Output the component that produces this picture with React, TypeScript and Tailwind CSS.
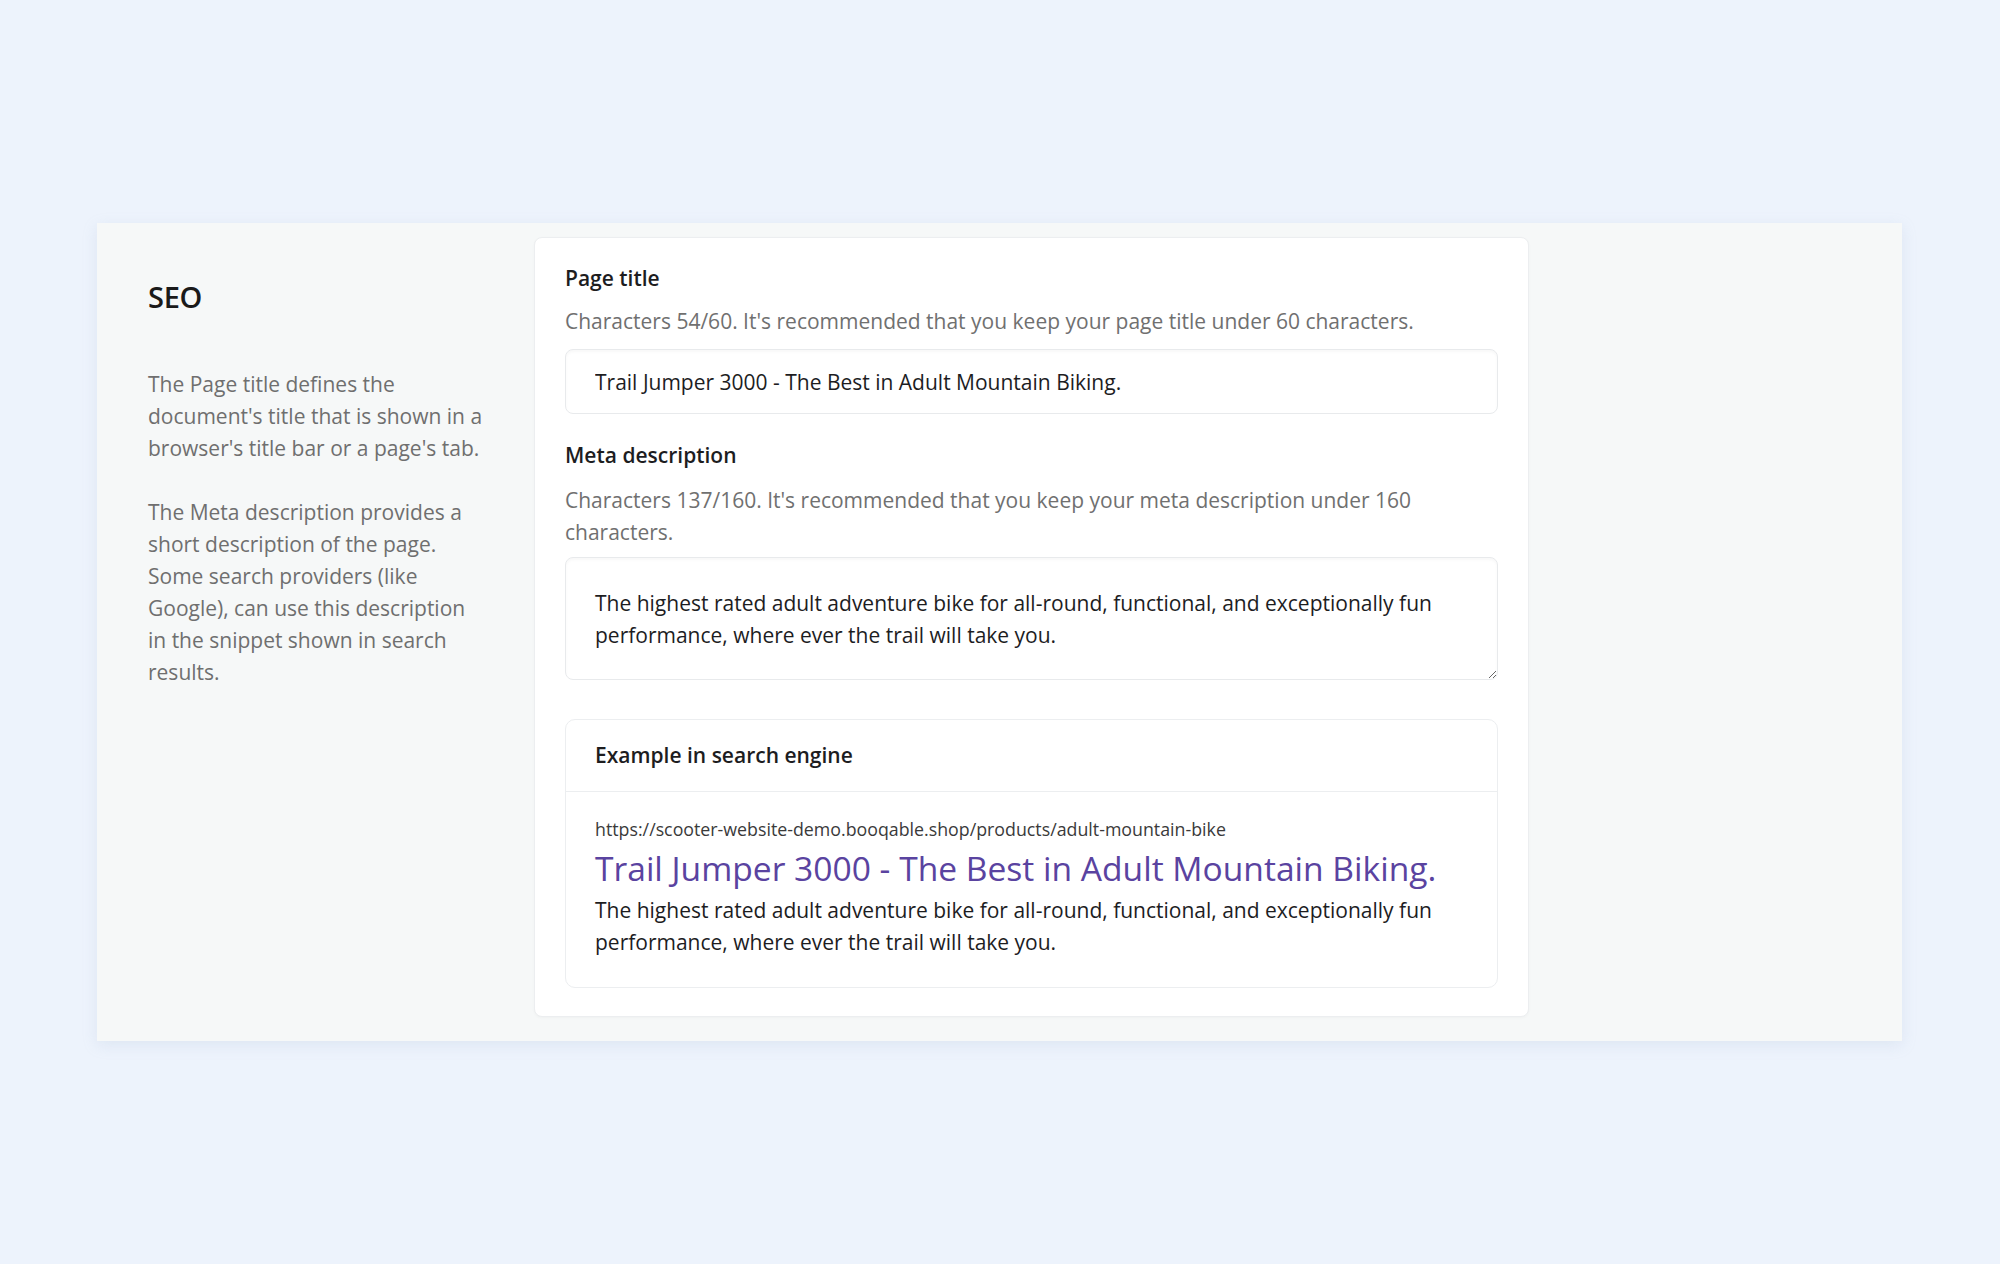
import React from "react";

const title = "Trail Jumper 3000 - The Best in Adult Mountain Biking.";
const description =
  "The highest rated adult adventure bike for all-round, functional, and exceptionally fun performance, where ever the trail will take you.";

export default function App() {
  return (
    <div
      className="min-h-[1264px] w-full bg-[#edf3fc] pl-[97px] pt-[223px] text-[#1d1d1f]"
      style={{ fontFamily: "'Open Sans', 'Noto Sans', Arial, sans-serif" }}
    >
      <div className="flex h-[818px] w-[1805px] bg-[#f6f8f8] pl-[51px] pt-[14px] shadow-[0_4px_14px_rgba(150,170,200,0.18)]">
        {/* left: explanation */}
        <div className="w-[386px] shrink-0 pr-[49px] pt-[43px]">
          <h2 className="text-[29px] font-semibold leading-[34px] tracking-[-0.01em] text-[#1a1a1a]">SEO</h2>
          <p className="mt-[54px] text-[21px] leading-[32px] text-[#6f6f6f]">
            The Page title defines the document's title that is shown in a browser's title bar or a page's tab.
          </p>
          <p className="mt-[32px] text-[21px] leading-[32px] text-[#6f6f6f]">
            The Meta description provides a short description of the page. Some search providers (like Google), can use
            this description in the snippet shown in search results.
          </p>
        </div>

        {/* right: form */}
        <div className="h-[780px] w-[995px] shrink-0 rounded-[8px] border border-[#eceef0] bg-white px-[30px] pt-[26px] shadow-[0_1px_3px_rgba(0,0,0,0.03)]">
          <div className="text-[21px] font-semibold leading-[28px]">Page title</div>
          <p className="mt-[13px] text-[21px] leading-[32px] text-[#707070]">
            Characters 54/60. It's recommended that you keep your page title under 60 characters.
          </p>
          <input
            readOnly
            value={title}
            className="mt-[12px] h-[65px] w-full rounded-[8px] border border-[#e8eaec] bg-white px-[29px] text-[21px] text-[#1d1d1f] shadow-[inset_0_2px_3px_rgba(0,0,0,0.03)] outline-none"
          />

          <div className="mt-[27px] text-[21px] font-semibold leading-[28px]">Meta description</div>
          <p className="mt-[15px] text-[21px] leading-[32px] text-[#707070]">
            Characters 137/160. It's recommended that you keep your meta description under 160 characters.
          </p>
          <textarea
            readOnly
            defaultValue={description}
            className="mt-[9px] block h-[123px] w-full resize-y rounded-[8px] border border-[#e8eaec] bg-white px-[29px] pt-[29px] text-[21px] leading-[32px] text-[#1d1d1f] shadow-[inset_0_2px_3px_rgba(0,0,0,0.03)] outline-none"
          />

          <div className="mt-[39px] rounded-[10px] border border-[#eceef0] bg-white">
            <div className="flex h-[72px] items-center border-b border-[#eceef0] px-[29px] text-[21px] font-semibold">
              Example in search engine
            </div>
            <div className="px-[29px] pb-[29px] pt-[25px]">
              <div className="text-[17.8px] leading-[24px] text-[#3a3a3a]">
                https://scooter-website-demo.booqable.shop/products/adult-mountain-bike
              </div>
              <div className="mt-[7px] text-[33.6px] leading-[40px] text-[#5a43a0]">{title}</div>
              <p className="mt-[6px] text-[21px] leading-[32px] text-[#1d1d1f]">{description}</p>
            </div>
          </div>
        </div>
      </div>
    </div>
  );
}
